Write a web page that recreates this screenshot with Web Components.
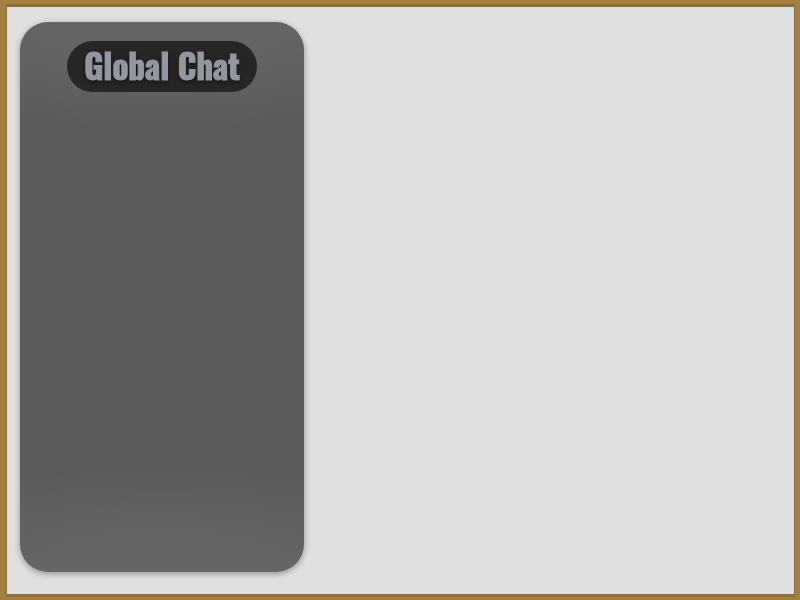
<!DOCTYPE html>
<html lang="en">
<head>
<meta charset="utf-8">
<title>Global Chat</title>
<style>
html, body { height: 100%; }
body { margin: 0; font-family: Impact, Oswald, "DejaVu Sans Condensed", sans-serif; }
</style>
</head>
<body>
<board-frame><chat-panel><chat-title>Global Chat</chat-title></chat-panel></board-frame>
<script>
customElements.define("board-frame", class extends HTMLElement {
  constructor() {
    super();
    this.attachShadow({ mode: "open" }).innerHTML = `
      <style>
        :host { display: flex; box-sizing: border-box; min-height: 100%; padding: 4px 5px 3px 6px; background: #a37f42; }
        .bevel { display: flex; flex: 1; padding: 3px 1px; background: #8f6f39; }
        main { display: flex; flex: 1; box-sizing: border-box; padding: 15px 13px 22px; background: #e0e0e0; }
      </style>
      <div class="bevel"><main><slot></slot></main></div>`;
  }
});
customElements.define("chat-panel", class extends HTMLElement {
  constructor() {
    super();
    this.attachShadow({ mode: "open" }).innerHTML = `
      <style>
        :host {
          display: flex; flex-direction: column; align-items: center; box-sizing: border-box;
          width: 284px; padding: 19px 16px; border-radius: 28px;
          background:
            radial-gradient(ellipse 125% 20% at 50% 0, #656565 30%, rgba(90, 90, 90, 0)),
            radial-gradient(ellipse 125% 20% at 50% 100%, #656565 30%, rgba(90, 90, 90, 0)),
            #5a5a5a;
          box-shadow: 0 2px 6px rgba(0, 0, 0, 0.35);
        }
      </style>
      <slot></slot>`;
  }
});
customElements.define("chat-title", class extends HTMLElement {
  constructor() {
    super();
    this.attachShadow({ mode: "open" }).innerHTML = `
      <style>
        :host { display: block; }
        h1 {
          box-sizing: border-box; min-width: 190px; margin: 0; padding: 5px 16px 6px; border-radius: 26px;
          background: #262626; color: #94979f;
          font-size: 33px; line-height: 40px; font-weight: 700; text-align: center; white-space: nowrap;
          -webkit-text-stroke: 1px #94979f; will-change: opacity;
          text-shadow: 0 2px 5px rgba(0, 0, 0, 0.6);
        }
      </style>
      <h1><slot></slot></h1>`;
  }
});
</script>
</body>
</html>
